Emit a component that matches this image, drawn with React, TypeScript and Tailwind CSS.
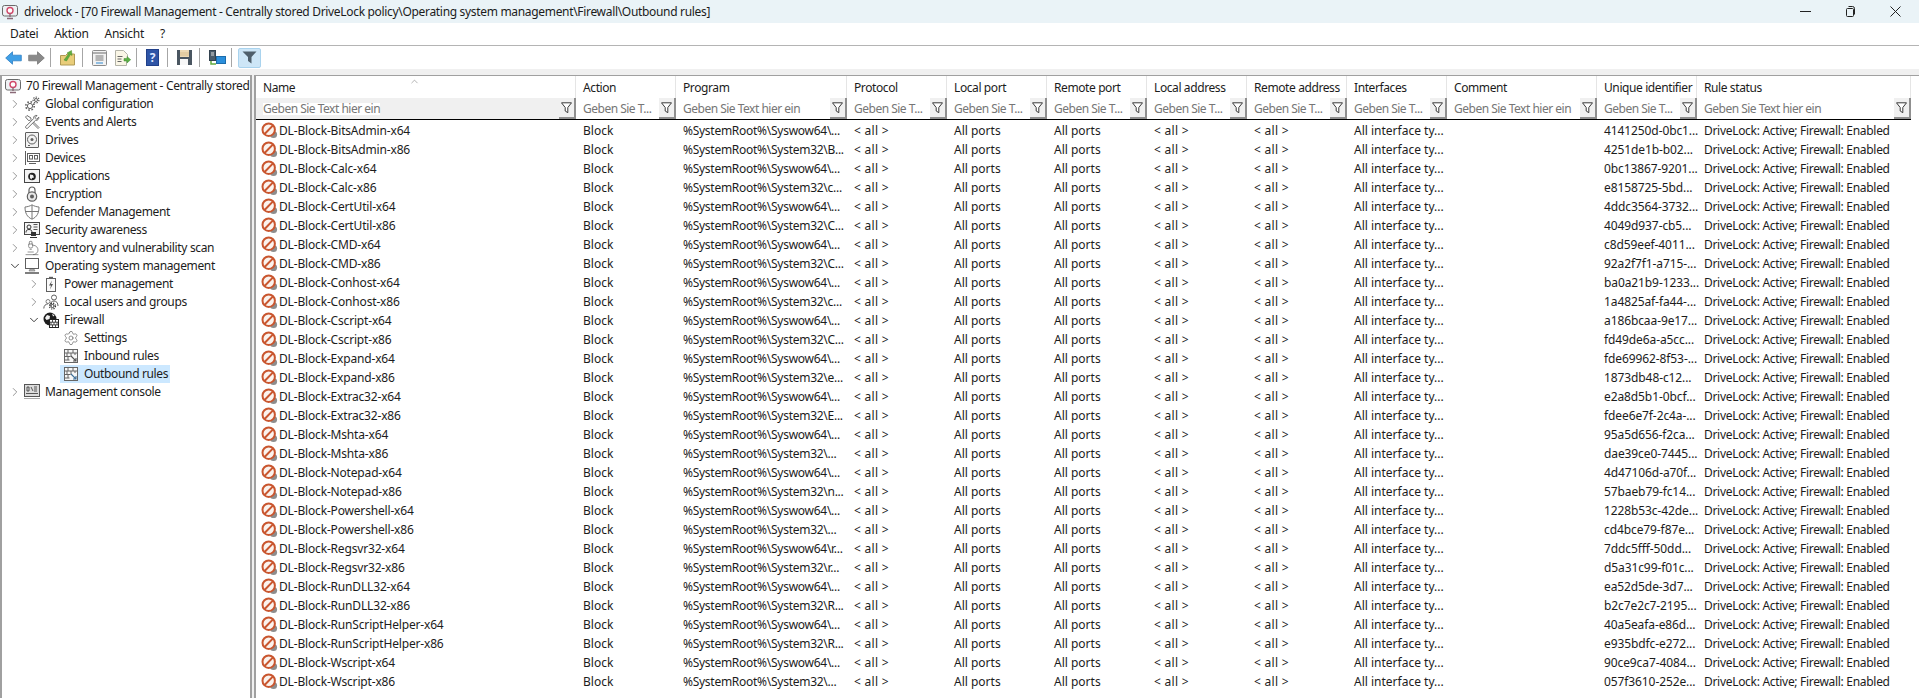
import React from "react";
import { ChevronRight, ChevronDown, ChevronUp, Microscope, Settings as Gear } from "lucide-react";

const G = "#5f5f5f";
const Svg = ({ children, w = 16, h = 16 }: { children: React.ReactNode; w?: number; h?: number }) => (
  <svg width={w} height={h} viewBox={`0 0 ${w} ${h}`} fill="none" className="shrink-0">{children}</svg>
);

const RootIcon = () => (
  <Svg>
    <rect x="0.5" y="1.5" width="15" height="10.5" rx="2" stroke="#6a6a6a" fill="#eef1f4" />
    <circle cx="8" cy="6.5" r="3" stroke="#d0486a" strokeWidth="1.4" fill="#fff" />
    <path d="M8 9.5V13M5 14.5h6" stroke="#8a6a78" strokeWidth="1.4" />
  </Svg>
);
const GearsIcon = () => (
  <Svg>
    <circle cx="6" cy="10" r="2.6" stroke={G} strokeWidth="1" />
    <circle cx="6" cy="10" r="4.2" stroke={G} strokeWidth="1.6" strokeDasharray="1.6 1.7" />
    <circle cx="12" cy="4" r="1.5" stroke={G} strokeWidth="1" />
    <circle cx="12" cy="4" r="2.9" stroke={G} strokeWidth="1.3" strokeDasharray="1.3 1.3" />
  </Svg>
);
const ToolsIcon = () => (
  <Svg>
    <path d="M3 1.5 1.5 3l3 3.5 1.3-.2 8.2 8.2 1-1-8.2-8.2.2-1.3z" stroke={G} fill="#fff" strokeWidth="0.9" />
    <path d="M14.8 3.2 12.7 5.2 11 3.6l2-2.1c-2-.6-3.8 1-3.3 3L1.8 12.4c-.8 1.2.6 2.6 1.8 1.8l7.9-7.9c2 .5 3.6-1.2 3.3-3.1z" stroke={G} fill="#fff" strokeWidth="0.9" />
  </Svg>
);
const DriveIcon = () => (
  <Svg>
    <rect x="1.5" y="0.5" width="13" height="15" rx="0.5" stroke={G} fill="#f2f2f2" />
    <circle cx="8" cy="7.5" r="4.5" stroke={G} />
    <circle cx="8" cy="7.5" r="1.5" fill={G} />
    <path d="M4 13.5h2" stroke={G} />
  </Svg>
);
const DeviceIcon = () => (
  <Svg>
    <path d="M1.5 1v14" stroke={G} />
    <rect x="3.5" y="3.5" width="12" height="8" stroke={G} />
    <rect x="5.5" y="5.5" width="3" height="3.5" stroke={G} />
    <rect x="10.5" y="5.5" width="3" height="3.5" stroke={G} />
    <path d="M5 13.5h7" stroke={G} />
  </Svg>
);
const AppsIcon = () => (
  <Svg>
    <rect x="0.5" y="1.5" width="15" height="13" stroke="#444" fill="#f4f4f4" />
    <circle cx="8" cy="8.5" r="3.8" fill="#222" />
    <path d="M6 6.5l3 .5 1 2.5-2 .5-.5 1.6L6 10z" fill="#eee" />
  </Svg>
);
const LockIcon = () => (
  <Svg>
    <path d="M5 7V4a3 3 0 0 1 6 0v3" stroke={G} strokeWidth="1.2" />
    <circle cx="8" cy="10.5" r="4.7" stroke={G} strokeWidth="1.2" fill="#e8e8e8" />
    <circle cx="8" cy="10.5" r="2" fill={G} />
  </Svg>
);
const ShieldIcon = () => (
  <Svg>
    <path d="M8 .8c2 1.3 4.5 2 7 2.2 0 6-2 10-7 12.2C3 13 1 9 1 3c2.5-.2 5-.9 7-2.2z" stroke="#777" fill="#fff" />
    <path d="M8 1v14M1 7.5h14" stroke="#777" />
  </Svg>
);
const AwarenessIcon = () => (
  <Svg>
    <rect x="0.5" y="0.5" width="15" height="12" stroke="#444" fill="#f4f4f4" />
    <circle cx="5" cy="5" r="2" stroke="#333" />
    <path d="M2 10.5c0-2 1-3 3-3s3 1 3 3" stroke="#333" />
    <path d="M9.5 2.5h4M9.5 5h4M9.5 7.5h4" stroke="#555" />
    <rect x="7" y="10" width="5" height="4" fill="#333" />
    <path d="M6 15.5h7" stroke="#333" />
  </Svg>
);
const MonitorIcon = () => (
  <Svg>
    <rect x="1.5" y="0.5" width="13" height="10" stroke={G} fill="#fff" />
    <path d="M6 11h4l1 2H5z" fill="#bbb" stroke={G} strokeWidth="0.5" />
    <path d="M1 15h14" stroke={G} strokeWidth="1.6" />
  </Svg>
);
const BatteryIcon = () => (
  <Svg>
    <path d="M6 1.5h4" stroke={G} strokeWidth="1.4" />
    <rect x="3.5" y="2.5" width="9" height="13" stroke={G} fill="#fafafa" />
    <path d="M9 4.5 6 9.5h2l-1 4 3-5.5H8z" fill="#555" />
  </Svg>
);
const UsersIcon = () => (
  <Svg>
    <circle cx="11" cy="3.5" r="2.5" stroke={G} />
    <path d="M7 12c0-3 1.5-5 4-5s4 2 4 5" stroke={G} />
    <circle cx="5" cy="7.5" r="2" stroke={G} strokeWidth="0.8" />
    <path d="M.8 14.5c0-3 2-4.5 4-4.5" stroke={G} />
    <circle cx="9.5" cy="12" r="1.6" stroke="#333" />
    <circle cx="9.5" cy="12" r="3" stroke="#333" strokeWidth="1.2" strokeDasharray="1.2 1.2" />
  </Svg>
);
const FirewallIcon = () => (
  <Svg>
    <circle cx="7" cy="7" r="6.5" fill="#1e1e1e" />
    <path d="M4 3l3 1-.5 3-3 1-1.5-2zM9 1.5l2.5 2-1.5 1z" fill="#f4f4f4" />
    <rect x="6.5" y="7.5" width="9" height="8" fill="#fff" stroke="#222" />
    <path d="M6.5 10.2h9M6.5 12.9h9M9.5 7.5v2.7M12.5 7.5v2.7M8 10.2v2.7M11 10.2v2.7M14 10.2v2.7M9.5 12.9v2.6M12.5 12.9v2.6" stroke="#222" strokeWidth="0.8" />
  </Svg>
);
const RuleIcon = ({ arrow = "#555" }: { arrow?: string }) => (
  <Svg>
    <rect x="1.5" y="1.5" width="13" height="13" stroke="#666" fill="#f7f7f7" />
    <path d="M1.5 5h13M1.5 8.5h6M1.5 12h5M5 1.5V5M10 1.5V5M4 5v3.5M8 5v3.5M12 5v2M5 8.5V12" stroke="#666" />
    <path d="M8 8l5 5M13 10v3h-3" stroke={arrow} strokeWidth="1.1" />
  </Svg>
);
const ConsoleIcon = () => (
  <Svg>
    <rect x="0.5" y="0.5" width="15" height="12" stroke="#555" fill="#dcdcdc" />
    <path d="M3 3h2v4H3zM7 3l2 4M10 3h3M10 5h3M10 7h3M2 9.5h12" stroke="#333" strokeWidth="0.8" />
    <path d="M0 14.5h16" stroke="#aaa" />
  </Svg>
);

const Block = () => (
  <svg width="17" height="17" viewBox="0 0 17 17" fill="none" className="shrink-0">
    <circle cx="12.5" cy="12.5" r="3.6" fill="#8d8d8d" />
    <circle cx="7.7" cy="7.7" r="6.2" stroke="#c9562f" strokeWidth="2" fill="#fbf3ee" />
    <path d="M3.6 12 12 3.4" stroke="#c9562f" strokeWidth="2" />
  </svg>
);

const Funnel = ({ c = "#3a3a3a" }: { c?: string }) => (
  <svg width="11" height="12" viewBox="0 0 11 12" fill="none">
    <path d="M.5.8h10L6.8 5.5v5.2L4.2 9V5.5z" stroke={c} strokeWidth="1" fill="#fff" />
  </svg>
);

const Sep = () => <div className="w-px h-[19px] bg-[#a6a6a6] mx-[5px]" />;

const Toolbar = () => (
  <div className="h-[23px] bg-white flex items-center pl-[5px] shrink-0">
    <svg width="17" height="14" viewBox="0 0 17 14" className="mr-[6px]">
      <path d="M7.5.8.7 7l6.8 6.2V9.8h8.8V4.2H7.5z" fill="#3f9fe6" stroke="#2f7fc4" strokeWidth="0.8" />
    </svg>
    <svg width="17" height="14" viewBox="0 0 17 14">
      <path d="M9.5.8 16.3 7l-6.8 6.2V9.8H.7V4.2h8.8z" fill="#8a8a8a" stroke="#777" strokeWidth="0.8" />
    </svg>
    <Sep />
    <svg width="15" height="16" viewBox="0 0 15 16" className="ml-[4px] mr-[2px]">
      <path d="M.5 5.5h5l1.5-1.5h7.5v11H.5z" fill="#e9cd7a" stroke="#b09a55" />
      <path d="M4 10l4.5-6L7 3l4.5-2.5.5 5-1.5-1L6.5 11z" fill="#5fae3c" stroke="#4d8f30" strokeWidth="0.5" />
    </svg>
    <Sep />
    <svg width="15" height="16" viewBox="0 0 15 16" className="ml-[4px] mr-[8px]">
      <rect x="0.5" y="0.5" width="14" height="15" rx="1" fill="#f2f2f2" stroke="#8b8b8b" />
      <path d="M1 3h13" stroke="#999" strokeWidth="1.5" />
      <path d="M3.5 6h8M3.5 8h8M3.5 10h8" stroke="#777" />
      <path d="M4 13h7" stroke="#67a8db" strokeWidth="1.4" />
    </svg>
    <svg width="16" height="16" viewBox="0 0 16 16">
      <path d="M.5.5h8l4 4v5h-1v6H.5z" fill="#faf6e6" stroke="#b3b3a8" />
      <path d="M2.5 6.5h5M2.5 9h4M2.5 11.5h4" stroke="#666" />
      <path d="M9 8.5h3V6.5l3.7 3.2L12 13v-2H9z" fill="#5bb146" stroke="#458c35" strokeWidth="0.5" />
    </svg>
    <Sep />
    <div className="w-[13px] h-[17px] bg-[#2f55a6] border border-[#21408a] ml-[4px] mr-[3px] flex items-center justify-center text-[#dfe8ff] text-[12px] font-bold leading-none">?</div>
    <Sep />
    <svg width="15" height="15" viewBox="0 0 15 15" className="ml-[4px] mr-[2px]">
      <rect width="15" height="15" fill="#4a5661" />
      <rect x="3" y="0" width="9" height="7" fill="#edd9b4" />
      <path d="M3 3h9M3 5h9" stroke="#d9bf90" />
      <rect x="3" y="9" width="8" height="6" fill="#f7f7f7" />
    </svg>
    <Sep />
    <svg width="17" height="16" viewBox="0 0 17 16" className="ml-[4px]">
      <rect x="0.5" y="0.5" width="6" height="10" fill="#4a5c6b" stroke="#33424f" />
      <path d="M2 3h3M2 5h3" stroke="#ddd" />
      <rect x="7.5" y="6.5" width="9" height="7" fill="#2a8fdc" stroke="#1c6cab" />
      <path d="M2 11v3h5" stroke="#62ac3f" strokeWidth="1.5" fill="none" />
    </svg>
    <Sep />
    <div className="w-[23px] h-[20px] ml-[1px] rounded-[2px] bg-[#cde6f7] border border-[#a9d3ee] flex items-center justify-center">
      <svg width="15" height="13" viewBox="0 0 15 13"><path d="M.5.5h14L9.5 6v6.5L6 10V6z" fill="#4f5f6b" /></svg>
    </div>
  </div>
);

type Node = { t: string; lv: 0 | 1 | 2 | 3; i: React.ReactNode; c?: "r" | "d"; sel?: boolean };
const tree: Node[] = [
  { t: "70 Firewall Management - Centrally stored", lv: 0, i: <RootIcon /> },
  { t: "Global configuration", lv: 1, i: <GearsIcon />, c: "r" },
  { t: "Events and Alerts", lv: 1, i: <ToolsIcon />, c: "r" },
  { t: "Drives", lv: 1, i: <DriveIcon />, c: "r" },
  { t: "Devices", lv: 1, i: <DeviceIcon />, c: "r" },
  { t: "Applications", lv: 1, i: <AppsIcon />, c: "r" },
  { t: "Encryption", lv: 1, i: <LockIcon />, c: "r" },
  { t: "Defender Management", lv: 1, i: <ShieldIcon />, c: "r" },
  { t: "Security awareness", lv: 1, i: <AwarenessIcon />, c: "r" },
  { t: "Inventory and vulnerability scan", lv: 1, i: <Microscope size={16} strokeWidth={1} color={G} />, c: "r" },
  { t: "Operating system management", lv: 1, i: <MonitorIcon />, c: "d" },
  { t: "Power management", lv: 2, i: <BatteryIcon />, c: "r" },
  { t: "Local users and groups", lv: 2, i: <UsersIcon />, c: "r" },
  { t: "Firewall", lv: 2, i: <FirewallIcon />, c: "d" },
  { t: "Settings", lv: 3, i: <Gear size={16} strokeWidth={1} color={G} /> },
  { t: "Inbound rules", lv: 3, i: <RuleIcon /> },
  { t: "Outbound rules", lv: 3, i: <RuleIcon arrow="#3d6f99" />, sel: true },
  { t: "Management console", lv: 1, i: <ConsoleIcon />, c: "r" },
];
const pad = { 0: "pl-[3px]", 1: "pl-[3px]", 2: "pl-[22px]", 3: "pl-[41px]" };

const Tree = () => (
  <div className="w-[252px] shrink-0 bg-white border-l-2 border-r-2 border-t border-[#a0a0a0] pt-px overflow-hidden tracking-[-0.35px]">
    {tree.map((n) => (
      <div key={n.t} className={`h-[18px] flex items-center whitespace-nowrap ${pad[n.lv]}`}>
        {n.lv === 3 || n.lv === 0 ? null : (
          <span className="w-[19px] shrink-0 flex justify-center">
            {n.c === "r" ? <ChevronRight size={14} strokeWidth={1.3} color="#777" /> : <ChevronDown size={14} strokeWidth={1.6} color="#333" />}
          </span>
        )}
        {n.lv === 3 ? (
          <div className={`ml-[17px] w-[110px] h-[18px] flex items-center gap-[5px] pl-[3px] ${n.sel ? "bg-[#cce8ff]" : ""}`}>
            {n.i}
            <span>{n.t}</span>
          </div>
        ) : (
          <div className="flex items-center gap-[5px]">
            {n.i}
            <span>{n.t}</span>
          </div>
        )}
      </div>
    ))}
  </div>
);

const cols = "grid grid-cols-[320px_100px_171px_100px_100px_100px_100px_100px_100px_150px_100px_214px]";
const headers = ["Name", "Action", "Program", "Protocol", "Local port", "Remote port", "Local address", "Remote address", "Interfaces", "Comment", "Unique identifier", "Rule status"];
const ph = "Geben Sie Text hier ein";
const short = "Geben Sie T...";
const filters = [ph, short, ph, short, short, short, short, short, short, ph, short, ph];

const Rows: [string, string, string][] = [
  ["BitsAdmin-x64", "Syswow64\\...", "4141250d-0bc1..."],
  ["BitsAdmin-x86", "System32\\B...", "4251de1b-b02..."],
  ["Calc-x64", "Syswow64\\...", "0bc13867-9201..."],
  ["Calc-x86", "System32\\c...", "e8158725-5bd..."],
  ["CertUtil-x64", "Syswow64\\...", "4ddc3564-3732..."],
  ["CertUtil-x86", "System32\\C...", "4049d937-cb5..."],
  ["CMD-x64", "Syswow64\\...", "c8d59eef-4011..."],
  ["CMD-x86", "System32\\C...", "92a2f7f1-a715-..."],
  ["Conhost-x64", "Syswow64\\...", "ba0a21b9-1233..."],
  ["Conhost-x86", "System32\\c...", "1a4825af-fa44-..."],
  ["Cscript-x64", "Syswow64\\...", "a186bcaa-9e17..."],
  ["Cscript-x86", "System32\\C...", "fd49de6a-a5cc..."],
  ["Expand-x64", "Syswow64\\...", "fde69962-8f53-..."],
  ["Expand-x86", "System32\\e...", "1873db48-c12..."],
  ["Extrac32-x64", "Syswow64\\...", "e2a8d5b1-0bcf..."],
  ["Extrac32-x86", "System32\\E...", "fdee6e7f-2c4a-..."],
  ["Mshta-x64", "Syswow64\\...", "95a5d656-f2ca..."],
  ["Mshta-x86", "System32\\...", "dae39ce0-7445..."],
  ["Notepad-x64", "Syswow64\\...", "4d47106d-a70f..."],
  ["Notepad-x86", "System32\\n...", "57baeb79-fc14..."],
  ["Powershell-x64", "Syswow64\\...", "1228b53c-42de..."],
  ["Powershell-x86", "System32\\...", "cd4bce79-f87e..."],
  ["Regsvr32-x64", "Syswow64\\r...", "7ddc5fff-50dd..."],
  ["Regsvr32-x86", "System32\\r...", "d5a31c99-f01c..."],
  ["RunDLL32-x64", "Syswow64\\...", "ea52d5de-3d7..."],
  ["RunDLL32-x86", "System32\\R...", "b2c7e2c7-2195..."],
  ["RunScriptHelper-x64", "Syswow64\\...", "40a5eafa-e86d..."],
  ["RunScriptHelper-x86", "System32\\R...", "e935bdfc-e272..."],
  ["Wscript-x64", "Syswow64\\...", "90ce9ca7-4084..."],
  ["Wscript-x86", "System32\\...", "057f3610-252e..."],
];

const Table = () => (
  <div className="flex-1 min-w-0 bg-white border-l-2 border-t border-[#a0a0a0] overflow-hidden">
    <div className={cols}>
      {headers.map((h, i) => (
        <div key={h} className="relative h-[22px] pl-[7px] pt-[2px] flex items-center border-r border-[#e5e5e5] whitespace-nowrap tracking-[-0.4px]">
          {h}
          {i === 0 && (
            <span className="absolute left-[153px] top-0">
              <ChevronUp size={11} strokeWidth={1.2} color="#777" />
            </span>
          )}
        </div>
      ))}
    </div>
    <div className="w-[1655px] border-b border-black">
      <div className={cols}>
        {filters.map((f, i) => (
          <div key={i} className={`h-[21px] flex items-center justify-between pl-[7px] ${i === 0 ? "bg-[#f0f0f0]" : ""}`}>
            <span className={`text-[#767676] whitespace-nowrap tracking-[-0.5px] ${i === 0 ? "bg-white" : ""}`}>{f}</span>
            <span className="w-[17px] h-[21px] bg-[#f0f0f0] border-r-2 border-b-2 border-[#8f8f8f] flex items-center justify-center">
              <Funnel />
            </span>
          </div>
        ))}
      </div>
    </div>
    <div className="pt-px">
      {Rows.map(([n, p, u]) => (
        <div key={n} className={`${cols} h-[19px] items-center whitespace-nowrap`}>
          <div className="flex items-center pl-[5px] gap-px tracking-[-0.17px]"><Block /><span>{"DL-Block-" + n}</span></div>
          <div className="pl-[7px]">Block</div>
          <div className="pl-[7px] tracking-[-0.27px]">{"%SystemRoot%\\" + p}</div>
          <div className="pl-[7px] tracking-[0.3px]">{"< all >"}</div>
          <div className="pl-[7px]">All ports</div>
          <div className="pl-[7px]">All ports</div>
          <div className="pl-[7px] tracking-[0.3px]">{"< all >"}</div>
          <div className="pl-[7px] tracking-[0.3px]">{"< all >"}</div>
          <div className="pl-[7px]">All interface ty...</div>
          <div />
          <div className="pl-[7px] tracking-[-0.1px]">{u}</div>
          <div className="pl-[7px] tracking-[-0.3px]">DriveLock: Active; Firewall: Enabled</div>
        </div>
      ))}
    </div>
  </div>
);

export default function App() {
  return (
    <div className="w-[1919px] h-[698px] overflow-hidden bg-[#f0f0f0] flex flex-col font-['Noto_Sans',sans-serif] text-[12px] text-[#1c1c1c] leading-none">
      <div className="h-[23px] shrink-0 bg-[#eaf3f7] flex items-center pl-[2px]">
        <RootIcon />
        <span className="ml-[6px] text-[12px] tracking-[-0.32px] whitespace-nowrap">drivelock - [70 Firewall Management - Centrally stored DriveLock policy\Operating system management\Firewall\Outbound rules]</span>
        <div className="ml-auto flex items-center gap-[34px] pr-[18px]">
          <svg width="11" height="11" viewBox="0 0 11 11"><path d="M0 5.5h11" stroke="#222" /></svg>
          <svg width="11" height="11" viewBox="0 0 11 11" fill="none"><rect x="1.5" y="2.5" width="7" height="8" rx="1" stroke="#222" /><path d="M3.5.5h4a2 2 0 0 1 2 2v6" stroke="#222" /></svg>
          <svg width="11" height="11" viewBox="0 0 11 11"><path d="M.5.5l10 10M10.5.5l-10 10" stroke="#222" /></svg>
        </div>
      </div>
      <div className="h-[23px] shrink-0 bg-white border-b border-[#b4b4b4] flex items-center pl-[10px] gap-[16px] tracking-[-0.3px]">
        <span>Datei</span>
        <span>Aktion</span>
        <span>Ansicht</span>
        <span>?</span>
      </div>
      <Toolbar />
      <div className="h-[6px] shrink-0" />
      <div className="flex-1 min-h-0 flex gap-[2px]">
        <Tree />
        <Table />
      </div>
    </div>
  );
}
